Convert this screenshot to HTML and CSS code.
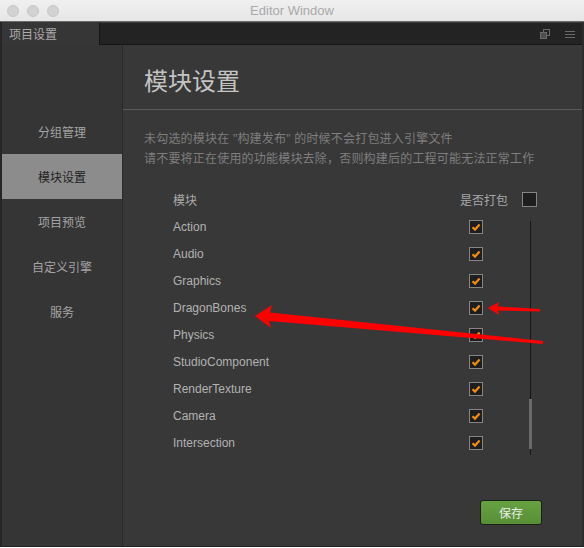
FILE: index.html
```html
<!DOCTYPE html>
<html lang="zh">
<head>
<meta charset="utf-8">
<title>Editor Window</title>
<link rel="stylesheet" href="styles.css">
</head>
<body>
<div class="window">
  <div class="titlebar">
    <div class="lights"><span class="light"></span><span class="light"></span><span class="light"></span></div>
    <div class="title">Editor Window</div>
    <div></div>
  </div>
  <div class="frame">
    <div class="tabbar">
      <div class="tab">项目设置</div>
      <div class="tabrest">
        <svg class="ico" width="10" height="10" viewBox="0 0 10 10"><rect x="3.5" y="0.5" width="6" height="6" fill="none" stroke="#6a6a6a"/><rect x="0.5" y="3.5" width="6" height="6" fill="#4e4e4e" stroke="#6a6a6a"/></svg>
        <svg class="ico" width="10" height="8" viewBox="0 0 10 8"><path d="M0 1.5H10M0 4.5H10M0 7.5H10" stroke="#6a6a6a" stroke-width="1"/></svg>
      </div>
    </div>
    <div class="body">
      <div class="sidebar">
        <div class="navitem">分组管理</div>
        <div class="navitem active">模块设置</div>
        <div class="navitem">项目预览</div>
        <div class="navitem">自定义引擎</div>
        <div class="navitem">服务</div>
      </div>
      <div class="content">
        <div class="head">模块设置</div>
        <div class="desc">
          <div>未勾选的模块在 "构建发布" 的时候不会打包进入引擎文件</div>
          <div>请不要将正在使用的功能模块去除，否则构建后的工程可能无法正常工作</div>
        </div>
        <div class="table">
          <div class="thead">
            <span class="th-name">模块</span>
            <span class="th-pack">是否打包</span>
            <span class="box big"></span>
          </div>
          <div class="list">
            <div class="rows">
              <div class="row"><span>Action</span><span class="box"><svg width="12" height="12" viewBox="0 0 12 12"><path d="M2.5 6.2L5 8.6L9.6 3.6" fill="none" stroke="#f28c0f" stroke-width="2.2"/></svg></span></div>
              <div class="row"><span>Audio</span><span class="box"><svg width="12" height="12" viewBox="0 0 12 12"><path d="M2.5 6.2L5 8.6L9.6 3.6" fill="none" stroke="#f28c0f" stroke-width="2.2"/></svg></span></div>
              <div class="row"><span>Graphics</span><span class="box"><svg width="12" height="12" viewBox="0 0 12 12"><path d="M2.5 6.2L5 8.6L9.6 3.6" fill="none" stroke="#f28c0f" stroke-width="2.2"/></svg></span></div>
              <div class="row"><span>DragonBones</span><span class="box"><svg width="12" height="12" viewBox="0 0 12 12"><path d="M2.5 6.2L5 8.6L9.6 3.6" fill="none" stroke="#f28c0f" stroke-width="2.2"/></svg></span></div>
              <div class="row"><span>Physics</span><span class="box"><svg width="12" height="12" viewBox="0 0 12 12"><path d="M2.5 6.2L5 8.6L9.6 3.6" fill="none" stroke="#f28c0f" stroke-width="2.2"/></svg></span></div>
              <div class="row"><span>StudioComponent</span><span class="box"><svg width="12" height="12" viewBox="0 0 12 12"><path d="M2.5 6.2L5 8.6L9.6 3.6" fill="none" stroke="#f28c0f" stroke-width="2.2"/></svg></span></div>
              <div class="row"><span>RenderTexture</span><span class="box"><svg width="12" height="12" viewBox="0 0 12 12"><path d="M2.5 6.2L5 8.6L9.6 3.6" fill="none" stroke="#f28c0f" stroke-width="2.2"/></svg></span></div>
              <div class="row"><span>Camera</span><span class="box"><svg width="12" height="12" viewBox="0 0 12 12"><path d="M2.5 6.2L5 8.6L9.6 3.6" fill="none" stroke="#f28c0f" stroke-width="2.2"/></svg></span></div>
              <div class="row"><span>Intersection</span><span class="box"><svg width="12" height="12" viewBox="0 0 12 12"><path d="M2.5 6.2L5 8.6L9.6 3.6" fill="none" stroke="#f28c0f" stroke-width="2.2"/></svg></span></div>
            </div>
            <div class="scrollbar"><div class="thumb"></div></div>
          </div>
        </div>
        <div class="footer"><button class="save">保存</button></div>
      </div>
    </div>
  </div>
  <svg class="arrows" width="584" height="548" viewBox="0 0 584 548">
    <polygon points="255,316 272,305 270,312.5 543,341 543,344 269,321 271,328" fill="#ff0000"/>
    <polygon points="488,308 499,302 498,306.5 540,309 540,311.5 498,310.5 499,315" fill="#ff0000"/>
  </svg>
</div>
</body>
</html>
```

FILE: styles.css
```css
* { box-sizing: border-box; }
html, body { margin: 0; padding: 0; background: #ffffff; }
body {
  font-family: "Liberation Sans", "Noto Sans CJK SC", sans-serif;
  font-size: 12px;
}
.window {
  position: relative;
  width: 584px;
  height: 548px;
  display: flex;
  flex-direction: column;
  overflow: hidden;
}
.titlebar {
  height: 22px;
  background: linear-gradient(#f0f0f0, #e6e6e6);
  border-bottom: 1px solid #6a6a6a;
  display: grid;
  grid-template-columns: 1fr auto 1fr;
  align-items: center;
}
.lights { display: flex; gap: 8px; padding-left: 7px; }
.light {
  width: 12px; height: 12px; border-radius: 50%;
  background: #d2d2d2; border: 1px solid #c6c6c6;
}
.title {
  font-family: "Liberation Sans", sans-serif;
  font-size: 13px;
  color: #a9a9a9;
}
.frame {
  flex: 1;
  display: flex;
  flex-direction: column;
  background: #353535;
  border-left: 2px solid #262626;
  border-right: 2px solid #2c2c2c;
  border-bottom: 1px solid #222;
  margin-bottom: 1px;
}
.tabbar { height: 23px; display: flex; }
.tab {
  width: 97px;
  padding-left: 7px;
  line-height: 23px;
  color: #ababab;
  font-family: "Noto Sans CJK SC", sans-serif;
  background: #363636;
}
.tabrest {
  flex: 1;
  background: #232323;
  border-left: 1px solid #151515;
  border-bottom: 1px solid #151515;
  border-top: 1px solid #3c3c3c;
  display: flex;
  justify-content: flex-end;
  align-items: center;
  gap: 15px;
  padding-right: 7px;
}
.ico { display: block; }
.body { flex: 1; display: flex; min-height: 0; }
.sidebar {
  width: 121px;
  padding-top: 64px;
  background: #353535;
  border-right: 1px solid #2a2a2a;
}
.navitem {
  height: 45px;
  line-height: 45px;
  text-align: center;
  color: #a4a4a4;
  font-family: "Noto Sans CJK SC", sans-serif;
}
.navitem.active { background: #8c8c8c; color: #1f1f1f; }
.content {
  flex: 1;
  background: #383838;
  display: flex;
  flex-direction: column;
}
.head {
  padding: 20px 0 14px 21px;
  line-height: 30px;
  font-size: 24px;
  color: #c4c4c4;
  font-family: "Noto Sans CJK SC", sans-serif;
  border-bottom: 1px solid #5c5c5c;
}
.desc {
  margin-top: 19px;
  padding-left: 21px;
  line-height: 20px;
  color: #7e7e7e;
  letter-spacing: 0.2px;
}
.table { margin-left: 50px; margin-top: 17px; }
.thead {
  height: 27px;
  display: flex;
  align-items: center;
  padding-right: 45px;
  color: #a8a8a8;
  font-family: "Noto Sans CJK SC", sans-serif;
}
.th-name { flex: 1; }
.th-pack { margin-right: 14px; }
.box {
  width: 14px; height: 14px;
  border: 1px solid #858585;
  background: #1e1e1e;
  display: flex;
  align-items: center;
  justify-content: center;
}
.box.big { width: 15px; height: 15px; }
.box svg { display: block; }
.list { display: flex; padding-right: 50px; }
.rows { flex: 1; }
.row {
  height: 27px;
  display: flex;
  align-items: center;
  justify-content: space-between;
  padding-right: 46px;
  color: #b2b2b2;
}
.scrollbar {
  position: relative;
  width: 3px;
  margin-top: 8px;
  height: 234px;
}
.scrollbar::before {
  content: "";
  position: absolute;
  left: 1px; top: 0; bottom: 0;
  width: 1px;
  background: #161616;
}
.thumb {
  position: absolute;
  left: 0; top: 178px;
  width: 3px; height: 50px;
  background: #6a6a6a;
}
.footer {
  display: flex;
  justify-content: flex-end;
  padding-right: 40px;
  margin-top: 44px;
}
.save {
  width: 62px;
  height: 25px;
  border: 1px solid #1b1f18;
  border-radius: 3px;
  background: linear-gradient(#66a242, #578f36);
  color: #ececec;
  font-family: "Noto Sans CJK SC", sans-serif;
  font-size: 12px;
  padding: 0;
}
.arrows { position: absolute; left: 0; top: 0; pointer-events: none; }
```
